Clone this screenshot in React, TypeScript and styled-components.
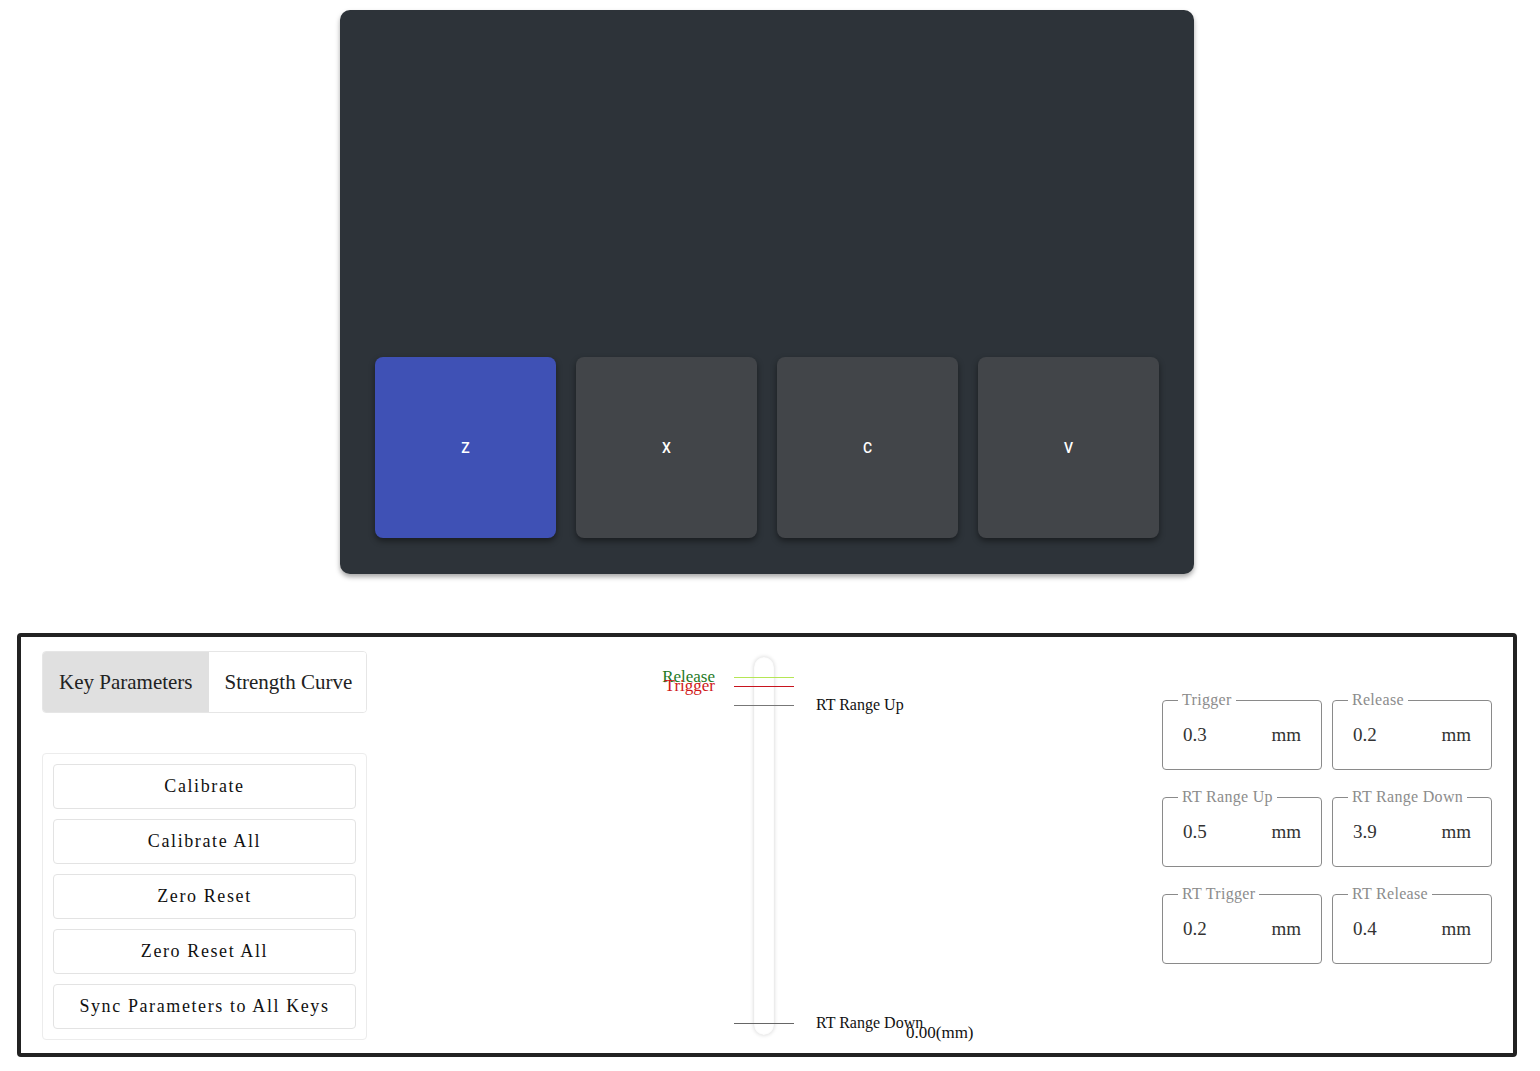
import React, { FunctionComponent, useState } from 'react';
import styled, { createGlobalStyle } from 'styled-components';

const SERIF = '"Liberation Serif", "DejaVu Serif", serif';

const GlobalStyle = createGlobalStyle`
  html, body {
    margin: 0;
    padding: 0;
    background: #ffffff;
  }
  body {
    font-family: ${SERIF};
    color: #111;
  }
`;

const Page = styled.div`
  width: 1540px;
  padding-top: 10px;
  box-sizing: border-box;
`;

/* ---------- keypad ---------- */

const KeyBoard = styled.div`
  box-sizing: border-box;
  width: 854px;
  height: 564px;
  margin-left: 340px;
  padding: 0 35px 36px;
  background: #2d3339;
  border-radius: 10px;
  box-shadow: 0 3px 5px rgba(0, 0, 0, 0.35);
  display: flex;
  align-items: flex-end;
  gap: 20px;
`;

const Key = styled.div<{ $active: boolean }>`
  width: 181px;
  height: 181px;
  border-radius: 8px;
  background: ${({ $active }) => ($active ? '#3f51b5' : '#424549')};
  box-shadow: 0 3px 6px rgba(0, 0, 0, 0.45);
  display: flex;
  align-items: center;
  justify-content: center;
  color: #ffffff;
  font-family: Roboto, 'Liberation Sans', sans-serif;
  font-weight: 500;
  font-size: 14px;
`;

/* ---------- settings panel ---------- */

const Settings = styled.div`
  box-sizing: border-box;
  width: 1500px;
  height: 424px;
  margin: 59px 0 0 17px;
  border: 4px solid #222;
  border-radius: 4px;
  padding: 14px 21px 13px;
  display: flex;
  align-items: stretch;
`;

const LeftColumn = styled.div`
  width: 325px;
  flex-shrink: 0;
  display: flex;
  flex-direction: column;
  justify-content: space-between;
`;

const TabBar = styled.div`
  display: flex;
  height: 62px;
  border: 1px solid #e6e6e6;
  border-radius: 4px;
  overflow: hidden;
  box-sizing: border-box;
`;

const Tab = styled.div<{ $active: boolean }>`
  padding: 0 16px;
  display: flex;
  align-items: center;
  flex-shrink: 0;
  white-space: nowrap;
  font-size: 21px;
  color: #222;
  background: ${({ $active }) => ($active ? '#e0e0e0' : '#ffffff')};
`;

const ButtonGroup = styled.div`
  border: 1px solid #ececec;
  border-radius: 4px;
  padding: 10px;
  display: flex;
  flex-direction: column;
  gap: 10px;
`;

const ActionButton = styled.button`
  height: 45px;
  border: 1px solid #e3e3e3;
  border-radius: 4px;
  background: #ffffff;
  font-family: ${SERIF};
  font-size: 18px;
  letter-spacing: 1.6px;
  color: #111;
  cursor: pointer;
`;

const TravelColumn = styled.div`
  flex: 1;
  padding-left: 274px;
`;

const Travel = styled.div`
  position: relative;
  width: 360px;
  height: 400px;
`;

const Track = styled.div`
  position: absolute;
  left: 113px;
  top: 6px;
  width: 20px;
  height: 378px;
  border-radius: 10px;
  background: #ffffff;
  box-shadow: 0 0 4px rgba(0, 0, 0, 0.18), inset 0 0 2px rgba(0, 0, 0, 0.06);
`;

const Mark = styled.div<{ $top: number; $color: string }>`
  position: absolute;
  left: 93px;
  top: ${({ $top }) => $top}px;
  width: 60px;
  height: 1px;
  background: ${({ $color }) => $color};
`;

const SideLabel = styled.span<{ $top: number; $color: string }>`
  position: absolute;
  right: 286px;
  top: ${({ $top }) => $top}px;
  font-size: 17px;
  line-height: 1;
  color: ${({ $color }) => $color};
  white-space: nowrap;
`;

const RangeLabel = styled.span<{ $top: number }>`
  position: absolute;
  left: 175px;
  top: ${({ $top }) => $top}px;
  font-size: 16px;
  line-height: 1;
  color: #111;
  white-space: nowrap;
`;

const Reading = styled.span`
  position: absolute;
  left: 265px;
  top: 373px;
  font-size: 17px;
  line-height: 1;
  color: #111;
`;

const FieldGrid = styled.div`
  flex-shrink: 0;
  display: grid;
  grid-template-columns: repeat(2, 160px);
  column-gap: 10px;
  row-gap: 19px;
  align-content: start;
  padding-top: 41px;
`;

const Field = styled.fieldset`
  box-sizing: border-box;
  height: 78px;
  margin: 0;
  padding: 0 20px;
  border: 1px solid #8a8a8a;
  border-radius: 4px;
  display: flex;
  align-items: center;
  justify-content: space-between;
`;

const Legend = styled.legend`
  padding: 0 4px;
  margin-left: -5px;
  font-size: 16px;
  line-height: 16px;
  color: #8c8c8c;
  letter-spacing: 0.3px;
`;

const Value = styled.span`
  font-size: 19px;
  color: #333;
  margin-top: -7px;
`;

const Unit = styled.span`
  font-size: 19px;
  color: #333;
  margin-top: -7px;
`;

const KEYS = ['Z', 'X', 'C', 'V'];

const ACTIONS = [
  'Calibrate',
  'Calibrate All',
  'Zero Reset',
  'Zero Reset All',
  'Sync Parameters to All Keys',
];

const FIELDS = [
  { label: 'Trigger', value: '0.3' },
  { label: 'Release', value: '0.2' },
  { label: 'RT Range Up', value: '0.5' },
  { label: 'RT Range Down', value: '3.9' },
  { label: 'RT Trigger', value: '0.2' },
  { label: 'RT Release', value: '0.4' },
];

const App: FunctionComponent = () => {
  const [activeKey] = useState('Z');
  const [tab, setTab] = useState(0);

  return (
    <Page>
      <GlobalStyle />
      <KeyBoard>
        {KEYS.map((k) => (
          <Key key={k} $active={k === activeKey}>
            {k}
          </Key>
        ))}
      </KeyBoard>

      <Settings>
        <LeftColumn>
          <TabBar>
            {['Key Parameters', 'Strength Curve'].map((t, i) => (
              <Tab key={t} $active={i === tab} onClick={() => setTab(i)}>
                {t}
              </Tab>
            ))}
          </TabBar>
          <ButtonGroup>
            {ACTIONS.map((a) => (
              <ActionButton key={a}>{a}</ActionButton>
            ))}
          </ButtonGroup>
        </LeftColumn>

        <TravelColumn>
          <Travel>
            <Track />
            <Mark $top={26} $color="#b5e655" />
            <Mark $top={35} $color="#c8141e" />
            <Mark $top={54} $color="#777" />
            <Mark $top={372} $color="#666" />
            <SideLabel $top={17} $color="#1f7a1f">
              Release
            </SideLabel>
            <SideLabel $top={26} $color="#d01818">
              Trigger
            </SideLabel>
            <RangeLabel $top={46}>RT Range Up</RangeLabel>
            <RangeLabel $top={364}>RT Range Down</RangeLabel>
            <Reading>0.00(mm)</Reading>
          </Travel>
        </TravelColumn>

        <FieldGrid>
          {FIELDS.map((f) => (
            <Field key={f.label}>
              <Legend>{f.label}</Legend>
              <Value>{f.value}</Value>
              <Unit>mm</Unit>
            </Field>
          ))}
        </FieldGrid>
      </Settings>
    </Page>
  );
};

export default App;
